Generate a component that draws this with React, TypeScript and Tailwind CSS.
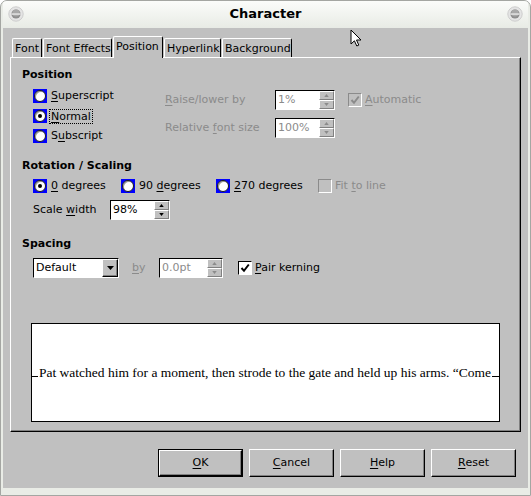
import React from "react";

const grey = "text-[#8b8b8b]";

function Mn({ children }: { children: React.ReactNode }) {
  return <span className="underline decoration-1 underline-offset-[2px]">{children}</span>;
}

function Radio({ checked, label, focused }: { checked?: boolean; label: React.ReactNode; focused?: boolean }) {
  return (
    <div className="flex items-center gap-[3px]">
      <span className="flex h-[14px] w-[14px] shrink-0 items-center justify-center bg-[#0000ff]">
        <span className="flex h-[12px] w-[12px] items-center justify-center rounded-full border border-[#1a1a1a] bg-white shadow-[inset_1px_1px_0_#9a9a9a]">
          {checked ? <span className="h-[4px] w-[4px] rounded-full bg-black" /> : null}
        </span>
      </span>
      <span className={focused ? "px-[1px] leading-[13px] outline-1 outline-dotted outline-black" : "px-[1px]"}>{label}</span>
    </div>
  );
}

function Check({ checked, disabled }: { checked?: boolean; disabled?: boolean }) {
  return (
    <span
      className={`flex h-[14px] w-[14px] shrink-0 items-center justify-center border ${
        disabled
          ? "border-t-[#8b8b8b] border-l-[#8b8b8b] border-r-white border-b-white bg-[#c0c0c0]"
          : "border-t-black border-l-black border-r-white border-b-white bg-white"
      }`}
    >
      {checked ? (
        <svg viewBox="0 0 10 10" className="h-[10px] w-[10px]">
          <path d="M1.5 5 L4 7.8 L8.8 1.5" fill="none" stroke={disabled ? "#8b8b8b" : "#000"} strokeWidth="2" />
        </svg>
      ) : null}
    </span>
  );
}

function Arrow({ up, disabled }: { up?: boolean; disabled?: boolean }) {
  const c = disabled ? "#8b8b8b" : "#000";
  return (
    <svg viewBox="0 0 6 4" className="h-[3px] w-[5px]">
      <path d={up ? "M0 4 L3 0 L6 4 Z" : "M0 0 L3 4 L6 0 Z"} fill={c} />
    </svg>
  );
}

function SpinField({ value, className, disabled }: { value: string; className: string; disabled?: boolean }) {
  return (
    <div className={`flex h-[20px] border border-t-black border-l-black border-r-white border-b-white bg-white ${className}`}>
      <div className={`flex flex-1 items-center pl-[2px] ${disabled ? grey : ""}`}>{value}</div>
      <div className="flex w-[15px] flex-col bg-[#c0c0c0]">
        <div className="flex flex-1 items-center justify-center border border-t-white border-l-white border-r-[#808080] border-b-[#808080]">
          <Arrow up disabled={disabled} />
        </div>
        <div className="flex flex-1 items-center justify-center border border-t-white border-l-white border-r-[#808080] border-b-[#808080]">
          <Arrow disabled={disabled} />
        </div>
      </div>
    </div>
  );
}

function Dropdown({ value }: { value: string }) {
  return (
    <div className="flex h-[20px] w-[86px] border border-t-black border-l-black border-r-white border-b-white bg-white">
      <div className="flex flex-1 items-center pl-[2px]">{value}</div>
      <div className="flex w-[16px] items-center justify-center border border-t-white border-l-white border-r-black border-b-black bg-[#c0c0c0] shadow-[inset_-1px_-1px_0_#808080]">
        <svg viewBox="0 0 7 4" className="h-[4px] w-[7px]">
          <path d="M0 0 L3.5 4 L7 0 Z" fill="#000" />
        </svg>
      </div>
    </div>
  );
}

function DlgButton({ children, isDefault }: { children: React.ReactNode; isDefault?: boolean }) {
  return (
    <div className={`h-[28px] w-[85px] ${isDefault ? "border border-black" : ""}`}>
      <div className="flex h-full w-full items-center justify-center border border-t-white border-l-white border-r-black border-b-black shadow-[inset_-1px_-1px_0_#808080]">
        {children}
      </div>
    </div>
  );
}

function Tab({ label, width, selected }: { label: string; width: string; selected?: boolean }) {
  return (
    <div
      className={`flex items-center rounded-t-[2px] border-t border-l border-r border-t-white border-l-white border-r-black bg-[#c0c0c0] pl-[2px] pt-[1px] ${width} ${
        selected ? "relative z-10 -mb-px h-[22px] pb-[2px]" : "h-[19px]"
      }`}
    >
      {label}
    </div>
  );
}

function TitleButton() {
  return (
    <svg viewBox="0 0 16 16" className="h-[16px] w-[16px]">
      <circle cx="8" cy="8" r="7.2" fill="#e4e4e4" stroke="#cdcdcd" />
      <circle cx="8" cy="8" r="4.6" fill="#8e8e8e" />
      <circle cx="8" cy="7" r="3.6" fill="#a8a8a8" />
      <rect x="3.4" y="7.4" width="9.2" height="1.3" fill="#ededed" />
    </svg>
  );
}

export default function App() {
  return (
    <div className="relative h-[496px] w-[531px] overflow-hidden rounded-t-[7px] border border-[#a4a6a2] bg-[#e9ece6] px-[2px] pb-[7px] font-['DejaVu_Sans',sans-serif] text-[11px] leading-[14px] text-black">
      {/* title bar */}
      <div className="flex h-[27px] items-center justify-between bg-gradient-to-b from-[#fbfcfa] to-[#e8ebe5] px-[5px] pb-[2px]">
        <TitleButton />
        <div className="text-[13px] font-bold">Character</div>
        <TitleButton />
      </div>

      {/* body */}
      <div className="h-[460px] bg-[#c0c0c0]">
        <div className="flex items-end gap-px pl-[9px] pt-[8px]">
          <Tab label="Font" width="w-[30px]" />
          <Tab label="Font Effects" width="w-[69px]" />
          <Tab label="Position" width="w-[50px]" selected />
          <Tab label="Hyperlink" width="w-[57px]" />
          <Tab label="Background" width="w-[70px]" />
        </div>

        <div className="ml-[7px] h-[375px] w-[511px] border border-t-white border-l-white border-r-black border-b-black shadow-[inset_-1px_-1px_0_#808080]">
          {/* Position */}
          <div className="mt-[9px] h-[16px] pl-[11px] font-bold leading-[16px]">Position</div>
          <div className="flex">
            <div className="ml-[22px] mt-[3px] flex w-[132px] flex-col">
              <div className="flex h-[20px] items-center">
                <Radio label={<><Mn>S</Mn>uperscript</>} />
              </div>
              <div className="flex h-[20px] items-center">
                <Radio checked focused label={<><Mn>N</Mn>ormal</>} />
              </div>
              <div className="flex h-[20px] items-center">
                <Radio label={<>S<Mn>u</Mn>bscript</>} />
              </div>
            </div>
            <div className="mt-[7px] flex flex-col gap-[8px]">
              <div className="flex h-[20px] items-center">
                <div className={`w-[110px] ${grey}`}>
                  <Mn>R</Mn>aise/lower by
                </div>
                <SpinField value="1%" className="w-[60px]" disabled />
                <div className="ml-[13px] flex items-center gap-[3px]">
                  <Check checked disabled />
                  <span className={grey}>
                    <Mn>A</Mn>utomatic
                  </span>
                </div>
              </div>
              <div className="flex h-[20px] items-center">
                <div className={`w-[110px] ${grey}`}>
                  Relative <Mn>f</Mn>ont size
                </div>
                <SpinField value="100%" className="w-[60px]" disabled />
              </div>
            </div>
          </div>

          {/* Rotation / Scaling */}
          <div className="mt-[12px] h-[16px] pl-[11px] font-bold leading-[16px]">Rotation / Scaling</div>
          <div className="ml-[22px] mt-[2px] flex h-[20px] items-center">
            <div className="w-[88px]">
              <Radio checked label={<><Mn>0</Mn> degrees</>} />
            </div>
            <div className="w-[95px]">
              <Radio label={<>90 <Mn>d</Mn>egrees</>} />
            </div>
            <div className="w-[102px]">
              <Radio label={<><Mn>2</Mn>70 degrees</>} />
            </div>
            <div className="flex items-center gap-[3px]">
              <Check disabled />
              <span className={grey}>
                Fit <Mn>t</Mn>o line
              </span>
            </div>
          </div>
          <div className="ml-[22px] mt-[4px] flex h-[20px] items-center">
            <div className="w-[77px]">
              Scale <Mn>w</Mn>idth
            </div>
            <SpinField value="98%" className="w-[60px]" />
          </div>

          {/* Spacing */}
          <div className="mt-[16px] h-[16px] pl-[11px] font-bold leading-[16px]">Spacing</div>
          <div className="ml-[22px] mt-[6px] flex h-[20px] items-center">
            <Dropdown value="Default" />
            <div className={`ml-[13px] w-[27px] ${grey}`}>
              <Mn>b</Mn>y
            </div>
            <SpinField value="0.0pt" className="w-[64px]" disabled />
            <div className="ml-[15px] flex items-center gap-[3px]">
              <Check checked />
              <span>
                <Mn>P</Mn>air kerning
              </span>
            </div>
          </div>

          {/* preview */}
          <div className="ml-[20px] mt-[45px] flex h-[99px] w-[469px] items-center justify-center overflow-hidden border border-black bg-white">
            <div className="flex items-baseline font-['Liberation_Serif',serif] text-[13.5px] leading-[18px]">
              <span className="inline-block h-px w-[7px] bg-black" />
              <span className="whitespace-nowrap px-px">
                Pat watched him for a moment, then strode to the gate and held up his arms. “Come
              </span>
              <span className="inline-block h-px w-[8px] bg-black" />
            </div>
          </div>
        </div>

        {/* buttons */}
        <div className="flex justify-end gap-[6px] pr-[12px] pt-[17px]">
          <DlgButton isDefault>
            <Mn>O</Mn>K
          </DlgButton>
          <DlgButton>
            <Mn>C</Mn>ancel
          </DlgButton>
          <DlgButton>
            <Mn>H</Mn>elp
          </DlgButton>
          <DlgButton>
            <Mn>R</Mn>eset
          </DlgButton>
        </div>
      </div>

      {/* mouse pointer */}
      <svg viewBox="0 0 12 18" className="absolute left-[349px] top-[28px] h-[18px] w-[12px]">
        <path d="M1 1 L1 15 L4.4 11.8 L6.8 17 L8.8 16.1 L6.5 11 L11 11 Z" fill="#fff" stroke="#000" strokeWidth="1" strokeLinejoin="round" />
      </svg>
    </div>
  );
}
